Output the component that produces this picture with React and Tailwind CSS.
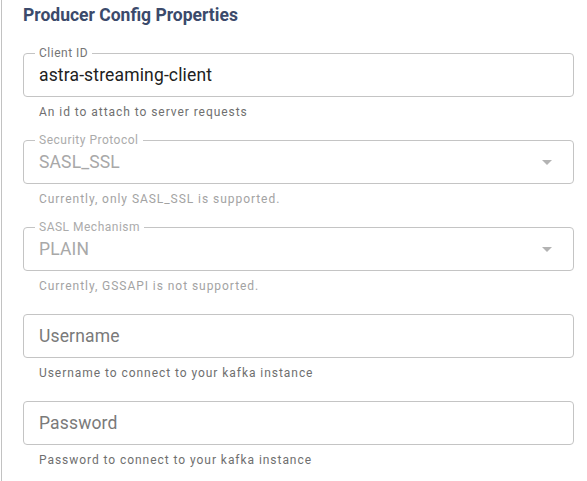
import React from "react";

const fields = [
  { label: "Client ID", value: "astra-streaming-client", helper: "An id to attach to server requests" },
  { label: "Security Protocol", value: "SASL_SSL", helper: "Currently, only SASL_SSL is supported.", disabled: true, select: true },
  { label: "SASL Mechanism", value: "PLAIN", helper: "Currently, GSSAPI is not supported.", disabled: true, select: true },
  { placeholder: "Username", helper: "Username to connect to your kafka instance" },
  { placeholder: "Password", helper: "Password to connect to your kafka instance" },
];

function Field({ label, value, placeholder, helper, disabled, select }) {
  return (
    <div className="mb-[20px]">
      <div className="relative h-[44px] rounded-[4px] border border-[#c4c4c4] flex items-center pl-[15px] pr-[20px]">
        {label && (
          <span
            className={
              "absolute left-[11px] top-[-9px] bg-white px-[4px] text-[12px] leading-[16px] tracking-[0.5px] " +
              (disabled ? "text-[#ababab]" : "text-[#757575]")
            }
          >
            {label}
          </span>
        )}
        <span
          className={
            "text-[17.5px] leading-[20px] tracking-[0.15px] flex-1 " +
            (disabled ? "text-[#a8a8a8]" : value ? "text-[#212121]" : "text-[#7a7a7a]")
          }
        >
          {value || placeholder}
        </span>
        {select && (
          <svg width="10" height="5" viewBox="0 0 10 5" className="mr-px">
            <path d="M0 0h10L5 5z" fill="#b3b3b3" />
          </svg>
        )}
      </div>
      <p
        className={
          "mt-[7px] pl-[16px] text-[12px] leading-[16px] tracking-[0.95px] " +
          (disabled ? "text-[#a3a3a3]" : "text-[#6f6f6f]")
        }
      >
        {helper}
      </p>
    </div>
  );
}

export default function App() {
  return (
    <div className="w-[587px] h-[481px] bg-white overflow-hidden font-['Roboto',sans-serif]">
      <div className="ml-px h-full border-l border-[#c2c2c2] pl-[21px] pr-[13px] pt-[5px]">
        <h2 className="text-[17.5px] leading-[20px] font-bold text-[#3b4a6b] mb-[28px]">
          Producer Config Properties
        </h2>
        {fields.map((f, i) => (
          <Field key={i} {...f} />
        ))}
      </div>
    </div>
  );
}
